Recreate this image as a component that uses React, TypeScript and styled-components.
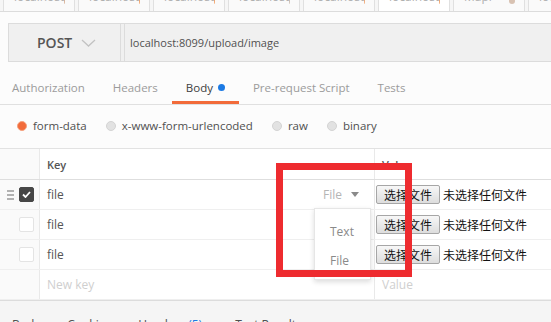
import React from "react"
import styled, { createGlobalStyle } from "styled-components"

const GlobalStyle = createGlobalStyle`
  html, body {
    margin: 0;
    padding: 0;
  }
  body {
    width: 551px;
    height: 322px;
    overflow: hidden;
    background: #fcfcfc;
    font-family: "Open Sans", "Noto Sans CJK SC", sans-serif;
    color: #505050;
  }
`

const Page = styled.div`
  position: relative;
  width: 551px;
  height: 322px;
  overflow: hidden;
  display: flex;
  flex-direction: column;
  & > * {
    flex-shrink: 0;
  }
`

// request tabs at the very top (cut off by the screenshot)
const TabStrip = styled.div`
  height: 11px;
  display: flex;
  gap: 3px;
  padding-left: 3px;
  overflow: hidden;
  border-bottom: 1px solid #dcdcdc;
  background: #f6f6f6;
`

const RequestTab = styled.div<{ $active?: boolean }>`
  flex: 0 0 72px;
  height: 11px;
  box-sizing: border-box;
  border-left: 1px solid #e0e0e0;
  border-right: 1px solid #e0e0e0;
  background: ${(p) => (p.$active ? "#fff" : "#fafafa")};
  display: flex;
  justify-content: space-between;
  align-items: flex-start;
  padding: 0 9px 0 10px;
  overflow: hidden;
`

const TabLabel = styled.span`
  font-size: 12px;
  line-height: 12px;
  color: #b0b0b0;
  margin-top: -9px;
  white-space: nowrap;
`

const TabMark = styled.span<{ $color: string }>`
  width: 6px;
  height: 6px;
  border-radius: 50%;
  margin-top: -2px;
  background: ${(p) => p.$color};
`

const UrlBar = styled.div`
  margin: 11px 0 0 8px;
  height: 39px;
  box-sizing: border-box;
  display: flex;
  border: 1px solid #dcdcdc;
  border-right: none;
  background: #f0f0f0;
`

const MethodSelect = styled.div`
  width: 112px;
  box-sizing: border-box;
  display: flex;
  align-items: center;
  gap: 9px;
  padding-left: 28px;
  border-right: 1px solid #dcdcdc;
  font-size: 14px;
  font-weight: 600;
  color: #555;
`

const UrlInput = styled.div`
  flex: 1;
  display: flex;
  align-items: center;
  margin-left: 3px;
  padding-left: 5px;
  border-left: 1px solid #dcdcdc;
  font-size: 11px;
  color: #505050;
`

const SectionTabs = styled.nav`
  margin-top: 8px;
  height: 34px;
  display: flex;
  border-bottom: 1px solid #e0e0e0;
`

const SectionTab = styled.div<{ $active?: boolean }>`
  display: flex;
  align-items: center;
  gap: 5px;
  padding: 0 14px;
  font-size: 11.5px;
  color: ${(p) => (p.$active ? "#404040" : "#9b9b9b")};
  box-shadow: ${(p) => (p.$active ? "inset 0 -3px 0 #f26b3a" : "none")};
  &:first-child {
    padding-left: 12px;
  }
`

const Dot = styled.span`
  width: 7px;
  height: 7px;
  border-radius: 50%;
  background: #1c7ae4;
`

const RadioRow = styled.div`
  height: 41px;
  margin-bottom: 2px;
  display: flex;
  align-items: center;
  gap: 19px;
  padding-left: 17px;
  font-size: 11.5px;
`

const RadioOption = styled.label`
  display: flex;
  align-items: center;
  gap: 6px;
  color: #505050;
`

const Radio = styled.span<{ $on?: boolean }>`
  width: 10px;
  height: 10px;
  box-sizing: border-box;
  border-radius: 50%;
  background: ${(p) => (p.$on ? "#f26b3a" : "#e2e2e2")};
  border: 1px solid ${(p) => (p.$on ? "#f5a27f" : "#d4d4d4")};
`

const Table = styled.div`
  border-top: 1px solid #e2e2e2;
  background: #fff;
`

const Row = styled.div<{ $head?: boolean }>`
  display: grid;
  grid-template-columns: 40px 334px 1fr;
  height: ${(p) => (p.$head ? "31px" : "30px")};
  box-sizing: border-box;
  border-bottom: 1px solid ${(p) => (p.$head ? "#dedede" : "#efefef")};
`

const ControlCell = styled.div`
  display: flex;
  align-items: center;
  gap: 5px;
  padding-left: 7px;
  background: #fafafa;
  border-right: 1px solid #e9e9e9;
`

const KeyCell = styled.div<{ $head?: boolean; $placeholder?: boolean }>`
  position: relative;
  display: flex;
  align-items: center;
  justify-content: space-between;
  padding: 0 15px 0 7px;
  font-size: ${(p) => (p.$head ? "11px" : "12px")};
  font-weight: ${(p) => (p.$head ? 600 : 400)};
  color: ${(p) => (p.$placeholder ? "#cfcfcf" : "#555")};
`

const ValueCell = styled.div<{ $head?: boolean; $placeholder?: boolean }>`
  display: flex;
  align-items: center;
  padding-left: ${(p) => (p.$head || p.$placeholder ? "7px" : "1px")};
  border-left: 1px solid #e9e9e9;
  font-size: ${(p) => (p.$head ? "11px" : "12px")};
  font-weight: ${(p) => (p.$head ? 600 : 400)};
  color: ${(p) => (p.$placeholder ? "#cfcfcf" : "#555")};
`

const Handle = styled.svg<{ $hidden?: boolean }>`
  visibility: ${(p) => (p.$hidden ? "hidden" : "visible")};
`

const Checkbox = styled.span<{ $checked?: boolean }>`
  width: 15px;
  height: 15px;
  box-sizing: border-box;
  border-radius: 2px;
  display: flex;
  align-items: center;
  justify-content: center;
  background: ${(p) => (p.$checked ? "#474747" : "#fff")};
  border: 1px solid ${(p) => (p.$checked ? "#474747" : "#e4e4e4")};
`

const TypeSelect = styled.div`
  display: flex;
  align-items: center;
  gap: 9px;
  color: #b5b5b5;
`

const Caret = styled.span`
  width: 0;
  height: 0;
  border-left: 4px solid transparent;
  border-right: 4px solid transparent;
  border-top: 5px solid #8a8a8a;
`

const TypeMenu = styled.ul`
  position: absolute;
  top: 28px;
  right: 3px;
  width: 57px;
  margin: 0;
  padding: 8px 0 4px;
  box-sizing: border-box;
  list-style: none;
  background: #fff;
  border: 1px solid #e6e6e6;
  box-shadow: 0 2px 5px rgba(0, 0, 0, 0.14);
  z-index: 2;
`

const TypeOption = styled.li`
  height: 29px;
  line-height: 29px;
  padding-left: 15px;
  font-size: 12px;
  color: #8a8a8a;
`

const FileButton = styled.span`
  height: 19px;
  box-sizing: border-box;
  display: flex;
  align-items: center;
  padding: 0 7px;
  border: 1px solid #a6a6a6;
  border-radius: 2px;
  background: linear-gradient(#f7f7f7, #dddddd);
  font-family: "Noto Sans CJK SC", sans-serif;
  font-size: 12px;
  color: #111;
`

const NoFile = styled.span`
  margin-left: 3px;
  font-family: "Noto Sans CJK SC", sans-serif;
  font-size: 12px;
  color: #111;
`

const ResponseTabs = styled.div`
  flex: 1 0 auto;
  display: flex;
  gap: 27px;
  padding: 15px 0 0 12px;
  border-top: 1px solid #dcdcdc;
  background: #f5f5f5;
  font-size: 12px;
  color: #505050;
`

const Count = styled.span`
  color: #1c7ae4;
  margin-right: 6px;
`

const Annotation = styled.div`
  position: absolute;
  left: 276px;
  top: 163px;
  width: 136px;
  height: 114px;
  box-sizing: border-box;
  border: 7px solid #ee2b2f;
  z-index: 5;
`

const tabs = [
  { label: "localhost", mark: "#d9b49a" },
  { label: "localhost", mark: "#f2a66e" },
  { label: "localhost", mark: "#f2a66e" },
  { label: "localhost", mark: "#cdbfb4" },
  { label: "localhost", mark: "#f0ab7a" },
  { label: "localhost", mark: "#f2a66e", active: true },
  { label: "Mapl", mark: "#d8c2b2" },
  { label: "localhost", mark: "#d8c2b2" },
]

const rows = [
  { key: "file", checked: true, menu: true },
  { key: "file" },
  { key: "file" },
]

const App = () => {
  return (
    <Page>
      <GlobalStyle />
      <TabStrip>
        {tabs.map((t, i) => (
          <RequestTab key={i} $active={t.active}>
            <TabLabel>{t.label}</TabLabel>
            <TabMark $color={t.mark} />
          </RequestTab>
        ))}
      </TabStrip>

      <UrlBar>
        <MethodSelect>
          POST
          <svg width="15" height="8" viewBox="0 0 15 8">
            <polyline points="1,1 7.5,7 14,1" fill="none" stroke="#c2c2c2" strokeWidth="1.3" />
          </svg>
        </MethodSelect>
        <UrlInput>localhost:8099/upload/image</UrlInput>
      </UrlBar>

      <SectionTabs>
        <SectionTab>Authorization</SectionTab>
        <SectionTab>Headers</SectionTab>
        <SectionTab $active>
          Body <Dot />
        </SectionTab>
        <SectionTab>Pre-request Script</SectionTab>
        <SectionTab>Tests</SectionTab>
      </SectionTabs>

      <RadioRow>
        <RadioOption>
          <Radio $on />
          form-data
        </RadioOption>
        <RadioOption>
          <Radio />
          x-www-form-urlencoded
        </RadioOption>
        <RadioOption>
          <Radio />
          raw
        </RadioOption>
        <RadioOption>
          <Radio />
          binary
        </RadioOption>
      </RadioRow>

      <Table>
        <Row $head>
          <ControlCell />
          <KeyCell $head>Key</KeyCell>
          <ValueCell $head>Value</ValueCell>
        </Row>
        {rows.map((r, i) => (
          <Row key={i}>
            <ControlCell>
              <Handle width="7" height="10" viewBox="0 0 7 10" $hidden={!r.checked}>
                <path d="M0 1h7M0 5h7M0 9h7" stroke="#9a9a9a" strokeWidth="1.3" />
              </Handle>
              <Checkbox $checked={r.checked}>
                {r.checked && (
                  <svg width="9" height="7" viewBox="0 0 9 7">
                    <polyline points="1,3.5 3.5,6 8,1" fill="none" stroke="#fff" strokeWidth="1.8" />
                  </svg>
                )}
              </Checkbox>
            </ControlCell>
            <KeyCell>
              {r.key}
              {r.menu && (
                <TypeSelect>
                  File <Caret />
                </TypeSelect>
              )}
              {r.menu && (
                <TypeMenu>
                  <TypeOption>Text</TypeOption>
                  <TypeOption>File</TypeOption>
                </TypeMenu>
              )}
            </KeyCell>
            <ValueCell>
              <FileButton>选择文件</FileButton>
              <NoFile>未选择任何文件</NoFile>
            </ValueCell>
          </Row>
        ))}
        <Row>
          <ControlCell />
          <KeyCell $placeholder>New key</KeyCell>
          <ValueCell $placeholder>Value</ValueCell>
        </Row>
      </Table>

      <ResponseTabs>
        <span>Body</span>
        <span>Cookies</span>
        <span>
          Headers <Count>(5)</Count>
        </span>
        <span>Test Results</span>
      </ResponseTabs>

      <Annotation />
    </Page>
  )
}

export default App
